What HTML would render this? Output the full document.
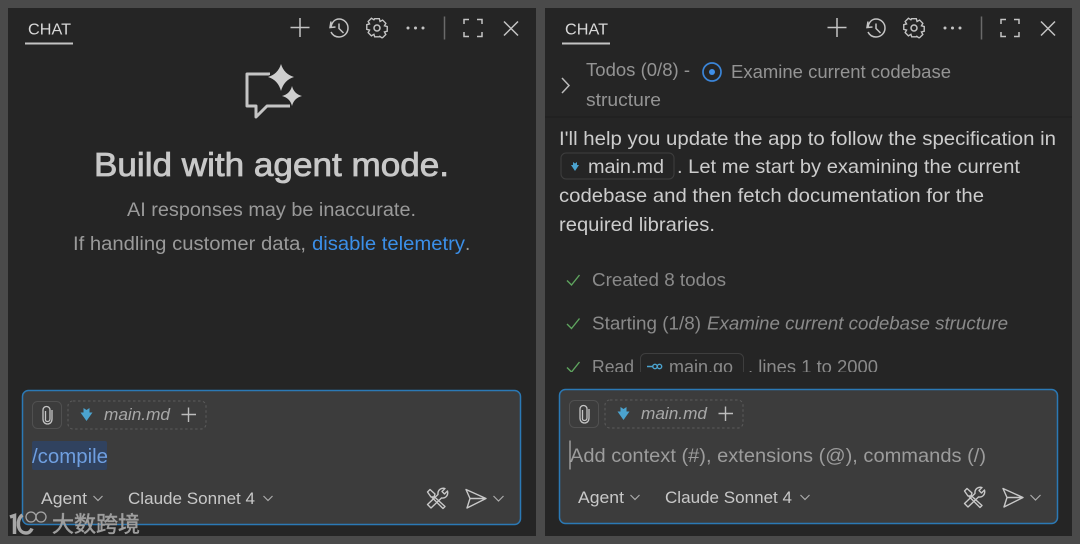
<!DOCTYPE html>
<html><head><meta charset="utf-8"><style>
html,body{margin:0;padding:0;background:#4a4a4a;width:1080px;height:544px;overflow:hidden}
svg{display:block;filter:blur(.35px)}
text{font-family:"Liberation Sans","Noto Sans CJK SC",sans-serif}
</style></head><body>
<svg width="1080" height="544" viewBox="0 0 1080 544" xmlns="http://www.w3.org/2000/svg">
<defs>
<g id="hdr" fill="none" stroke="#c4c4c4" stroke-width="1.500">
  <path d="M300 18V37M290.500 27.500H309.500"/>
  <path d="M331 21.500L330 27.500L335.500 27M331 27C332 22 335 19 339 19C344 19 348 23 348 28C348 33 344 37 339 37C335.500 37 332.500 35 331 32M339 23.500V28.500L343.500 33"/>
  <path d="M374.500 18.500H379.500L380.300 21.500L383 20L386.500 23.500L385 26.200L388 27V32L385 32.800L386.500 35.500L383 39H382L380 37.500L379.500 38H374.500L373.700 35.300L371 37L367.500 33.500L369 30.800L366 30V25L369 24.200L367.500 21.500L371 18L373.700 19.700Z" transform="translate(0,-.5) translate(377,28) scale(.93) translate(-377,-28)"/>
  <circle cx="377" cy="28" r="3"/>
  <path d="M444.500 16.500V39.500" stroke="#6a6a6a"/>
  <path d="M464 24V19.500H469M477 19.500H482V24M482 32V36.500H477M469 36.500H464V32"/>
  <path d="M504 21.500L518 35.500M518 21.500L504 35.500"/>
  <g fill="#c4c4c4" stroke="none"><circle cx="408" cy="28" r="1.500"/><circle cx="415.500" cy="28" r="1.500"/><circle cx="423" cy="28" r="1.500"/></g>
  <path d="M25 43.500H73" stroke="#c4c4c4" stroke-width="2"/>
</g>
<g id="clip"><rect x="32.500" y="401.500" width="29" height="27" rx="5" fill="none" stroke="#505050" stroke-width="1"/>
  <path d="M52 410V419C52 422 50 424 47.500 424C45 424 43 422 43 419V410C43 408 44.500 406.500 46.500 406.500C48.500 406.500 50 408 50 410V419C50 420.500 49 421.500 47.500 421.500C46 421.500 45 420.500 45.500 419V411" fill="none" stroke="#c4c4c4" stroke-width="1.300"/>
  <rect x="68" y="401" width="138" height="28" rx="5" fill="none" stroke="#5b5b5b" stroke-dasharray="2.500 2.500"/>
  <path d="M83.500 408L86.500 410L89.500 408V412.500H92.500L86.500 421L80.500 412.500H83.500Z" fill="#4ba3cf"/>
  <path d="M188.500 407.500V422M181.500 414.500H196" fill="none" stroke="#bdbdbd" stroke-width="1.400"/>
  <text x="104" y="420" font-size="17" font-style="italic" fill="#a8a8a8" textLength="66" lengthAdjust="spacingAndGlyphs">main.md</text>
  <text x="41" y="504" font-size="17" fill="#c8c8c8" textLength="46" lengthAdjust="spacingAndGlyphs">Agent</text>
  <path d="M93.500 496L98 500.500L102.500 496M263.500 496L268 500.500L272.500 496M493.500 496L498.500 501L503.500 496" fill="none" stroke="#aaa" stroke-width="1.200"/>
  <text x="128" y="504" font-size="17" fill="#c8c8c8" textLength="127" lengthAdjust="spacingAndGlyphs">Claude Sonnet 4</text>
  <g fill="none" stroke="#c8c8c8" stroke-width="1.400" stroke-linejoin="round">
    <path d="M427.500 492L430 489.500L435 494L434 497L431 497ZM434 496.500L445 506.500L443 508.500L432 497.500"/>
    <path d="M445 488.500C441 487.500 437.500 490 438 494.500L427.500 504.500L431 508L441.500 498C446 498.500 448.500 495 447.500 491L444.500 494L442 491.500Z"/>
    <path d="M466 489.500L486 498.500L467 508L470 498.500ZM470 498.500H486"/>
  </g>
</g>
<clipPath id="msg"><rect x="545" y="120" width="527" height="252"/></clipPath>
</defs>

<rect x="8" y="8" width="528" height="528" fill="#252525"/>
<rect x="545" y="8" width="527" height="528" fill="#252525"/>

<!-- LEFT -->
<text x="28" y="34.500" font-size="16" fill="#d8d8d8" textLength="43" lengthAdjust="spacingAndGlyphs">CHAT</text>
<use href="#hdr"/>
<path d="M270 74H247V106H256V117L267 106H290" fill="none" stroke="#c4c4c4" stroke-width="3" stroke-linejoin="round"/>
<path d="M281 64Q284 74 294 77Q284 80 281 91Q278 80 268 77Q278 74 281 64Z" fill="#cfcfcf" stroke="#252525" stroke-width="2.500" paint-order="stroke"/>
<path d="M292 86Q294 94 302 96Q294 98 292 106Q290 98 282 96Q290 94 292 86Z" fill="#cfcfcf" stroke="#252525" stroke-width="2.500" paint-order="stroke"/>
<text x="94" y="176" font-size="33" fill="#c8c8c8" stroke="#c8c8c8" stroke-width=".8" textLength="355" lengthAdjust="spacingAndGlyphs">Build with agent mode.</text>
<text x="127" y="216" font-size="19" fill="#9a9a9a" textLength="289" lengthAdjust="spacingAndGlyphs">AI responses may be inaccurate.</text>
<text x="73" y="250" font-size="19" fill="#9a9a9a" textLength="233" lengthAdjust="spacingAndGlyphs">If handling customer data,</text>
<text x="312" y="250" font-size="19" fill="#3b8fe8" textLength="153" lengthAdjust="spacingAndGlyphs">disable telemetry</text>
<text x="465" y="250" font-size="19" fill="#9a9a9a">.</text>
<rect x="22.500" y="390.500" width="498" height="134" rx="6" fill="#3c3c3c" stroke="#2b79b5" stroke-width="1.500"/>
<use href="#clip"/>
<rect x="32" y="441" width="75" height="29" rx="2" fill="#30425f"/>
<text x="32" y="463" font-size="20" fill="#6f9fe0" textLength="76" lengthAdjust="spacingAndGlyphs">/compile</text>

<!-- RIGHT -->
<text x="565" y="34.500" font-size="16" fill="#d8d8d8" textLength="43" lengthAdjust="spacingAndGlyphs">CHAT</text>
<use href="#hdr" x="537"/>
<path d="M562 78L569 85.500L562 93" fill="none" stroke="#bbb" stroke-width="1.500"/>
<text x="586" y="76" font-size="18" fill="#949494" textLength="104" lengthAdjust="spacingAndGlyphs">Todos (0/8) -</text>
<circle cx="712" cy="72" r="9" fill="none" stroke="#3b85d8" stroke-width="1.700"/>
<circle cx="712" cy="72" r="3" fill="#3f8fe8"/>
<text x="731" y="78" font-size="18" fill="#949494" textLength="220" lengthAdjust="spacingAndGlyphs">Examine current codebase</text>
<text x="586" y="106" font-size="18" fill="#949494" textLength="75" lengthAdjust="spacingAndGlyphs">structure</text>
<rect x="545" y="116" width="527" height="2" fill="#212121"/>

<g clip-path="url(#msg)">
<text x="559" y="145" font-size="19.500" fill="#cccccc" textLength="497" lengthAdjust="spacingAndGlyphs">I'll help you update the app to follow the specification in</text>
<rect x="561" y="153" width="113" height="26" rx="5" fill="none" stroke="#3e3e3e"/>
<path d="M573 162L575 163.500L577 162V165H579L575 171L571 165H573Z" fill="#4ba3cf"/>
<text x="588" y="173" font-size="19.500" fill="#cccccc" textLength="76" lengthAdjust="spacingAndGlyphs">main.md</text>
<text x="677" y="173" font-size="19.500" fill="#cccccc" textLength="343" lengthAdjust="spacingAndGlyphs">. Let me start by examining the current</text>
<text x="559" y="202" font-size="19.500" fill="#cccccc" textLength="425" lengthAdjust="spacingAndGlyphs">codebase and then fetch documentation for the</text>
<text x="559" y="231" font-size="19.500" fill="#cccccc" textLength="156" lengthAdjust="spacingAndGlyphs">required libraries.</text>

<path d="M567 280.500L571.500 285L579.500 275M567 324L571.500 328.500L579.500 318.500M567 367.500L571.500 372L579.500 362" fill="none" stroke="#5fa55f" stroke-width="1.400"/>
<text x="592" y="286" font-size="18" fill="#8a8a8a" textLength="134" lengthAdjust="spacingAndGlyphs">Created 8 todos</text>
<text x="592" y="329.500" font-size="18" fill="#8a8a8a" textLength="109" lengthAdjust="spacingAndGlyphs">Starting (1/8)</text>
<text x="707" y="329.500" font-size="18" font-style="italic" fill="#8a8a8a" textLength="301" lengthAdjust="spacingAndGlyphs">Examine current codebase structure</text>
<text x="592" y="373" font-size="18" fill="#8a8a8a" textLength="42" lengthAdjust="spacingAndGlyphs">Read</text>
<rect x="640.500" y="353.500" width="103" height="30" rx="5" fill="none" stroke="#3e3e3e"/>
<path d="M647 366.500H653" stroke="#4ba3cf" stroke-width="1.500"/>
<circle cx="655" cy="366.500" r="2.200" fill="none" stroke="#4ba3cf" stroke-width="1.400"/>
<circle cx="659.500" cy="366.500" r="2.200" fill="none" stroke="#4ba3cf" stroke-width="1.400"/>
<text x="669" y="373" font-size="18" fill="#8a8a8a" textLength="64" lengthAdjust="spacingAndGlyphs">main.go</text>
<text x="748" y="373" font-size="18" fill="#8a8a8a" textLength="130" lengthAdjust="spacingAndGlyphs">, lines 1 to 2000</text>
</g>

<rect x="559.500" y="389.500" width="498" height="134" rx="6" fill="#3c3c3c" stroke="#2b79b5" stroke-width="1.500"/>
<use href="#clip" x="537" y="-1"/>
<text x="570" y="462" font-size="19" fill="#9c9c9c" textLength="416" lengthAdjust="spacingAndGlyphs">Add context (#), extensions (@), commands (/)</text>
<path d="M570 440.500V469.500" stroke="#aaa" stroke-width="1.300"/>

<!-- watermark -->
<g fill="none" stroke="#a6a6a6">
  <path d="M10 517L14.500 515.500V534" stroke-width="3.500"/>
  <path d="M22.500 515C16 519 17 533 26 533C29 533 31 531 32 528.500" stroke-width="3.500"/>
  <circle cx="31" cy="517" r="5" stroke-width="1.300"/><circle cx="41" cy="517" r="5" stroke-width="1.300"/>
</g>
<text x="52" y="532" font-size="22" fill="#9e9e9e" stroke="#9e9e9e" stroke-width=".5" textLength="88" lengthAdjust="spacingAndGlyphs">大数跨境</text>
</svg>
</body></html>
